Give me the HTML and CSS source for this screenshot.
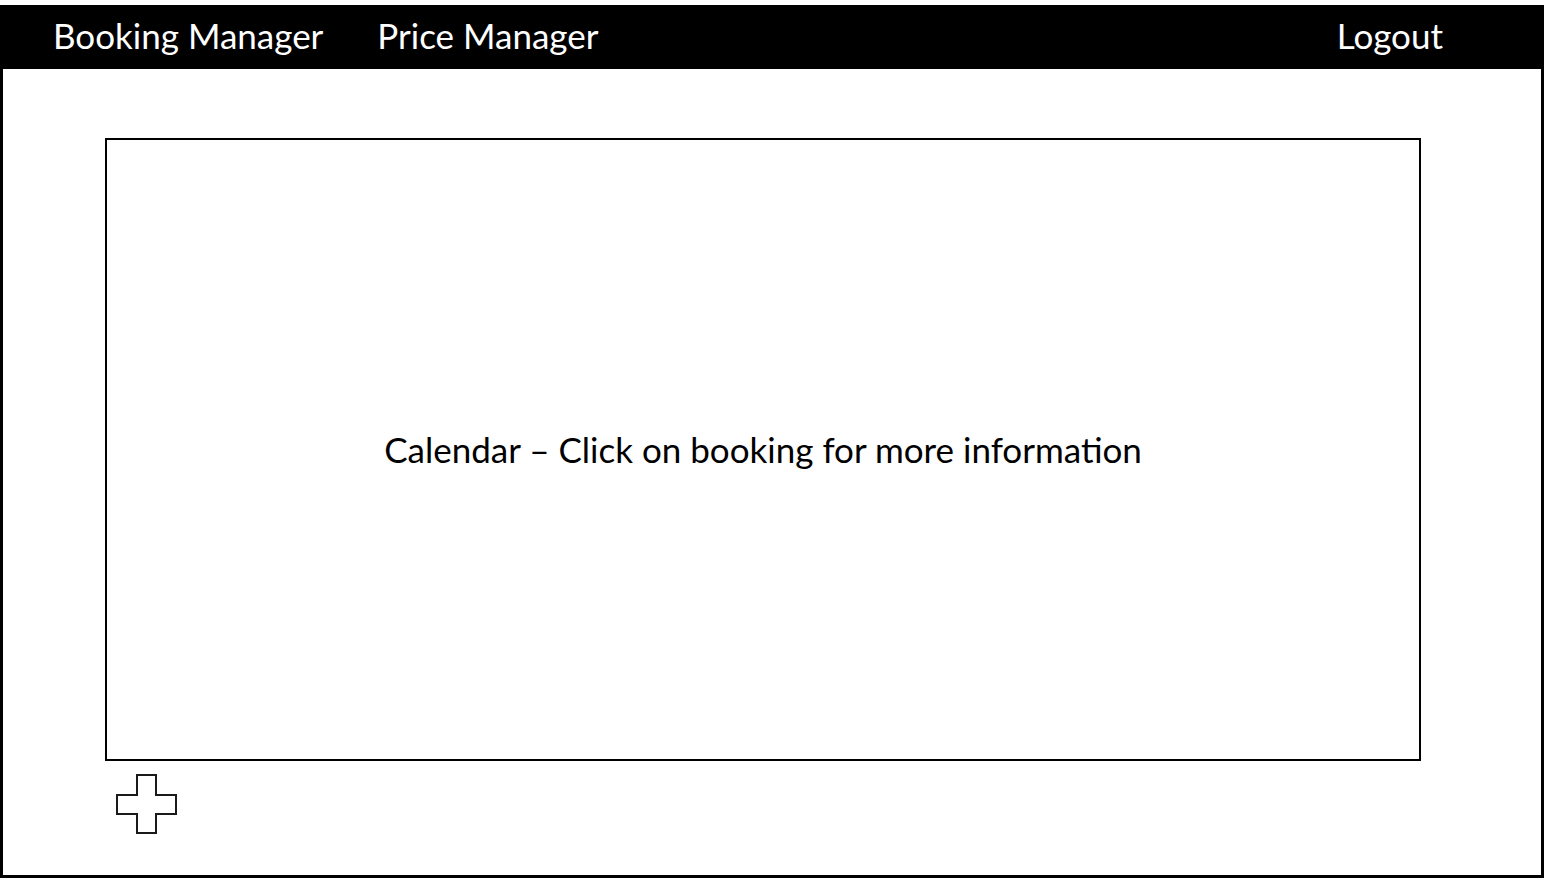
FILE: index.html
```html
<!DOCTYPE html>
<html lang="en">
<head>
    <meta charset="UTF-8">
    <meta name="viewport" content="width=device-width, initial-scale=1.0">
    <title>Booking Manager</title>
    <link rel="stylesheet" href="styles.css">
</head>
<body>
    <div class="frame">
        <div class="topbar">
            <a href="javascript:;" class="nav-link">Booking Manager</a>
            <a href="javascript:;" class="nav-link nav-price">Price Manager</a>
            <a href="javascript:;" class="nav-link nav-logout">Logout</a>
        </div>
        <div class="content">
            <div class="calendar">
                <span>Calendar &ndash; Click on booking for more information</span>
            </div>
            <a href="javascript:;" class="add-btn">
                <svg width="62" height="60" viewBox="0 0 62 60">
                    <polygon points="21,1 40,1 40,21 60,21 60,40 40,40 40,59 21,59 21,40 1,40 1,21 21,21" fill="#fff" stroke="#1a1a1a" stroke-width="2"/>
                </svg>
            </a>
        </div>
    </div>
</body>
</html>
```

FILE: styles.css
```css
*{
    box-sizing: border-box;
}
body{
    margin: 0;
    background: #fff;
    font-family: Lato, "Open Sans", sans-serif;
}
.frame{
    margin-top: 5px;
    width: 1544px;
    height: 873px;
    border: 3px solid #000;
    border-top: none;
}
.topbar{
    height: 64px;
    background: #000;
    display: flex;
    align-items: center;
    padding: 0 98px 4px 50px;
}
.nav-link{
    color: #fff;
    text-decoration: none;
    font-size: 35px;
    line-height: 1;
}
.nav-price{
    margin-left: 54px;
}
.nav-logout{
    margin-left: auto;
}
.content{
    padding: 69px 120px 0 102px;
}
.calendar{
    height: 623px;
    border: 2px solid #000;
    display: flex;
    align-items: center;
    justify-content: center;
    font-size: 35px;
    color: #000;
}
.calendar span{
    margin-top: -2px;
}
.add-btn{
    display: block;
    width: 62px;
    margin: 13px 0 0 11px;
}
.add-btn svg{
    display: block;
}
```
